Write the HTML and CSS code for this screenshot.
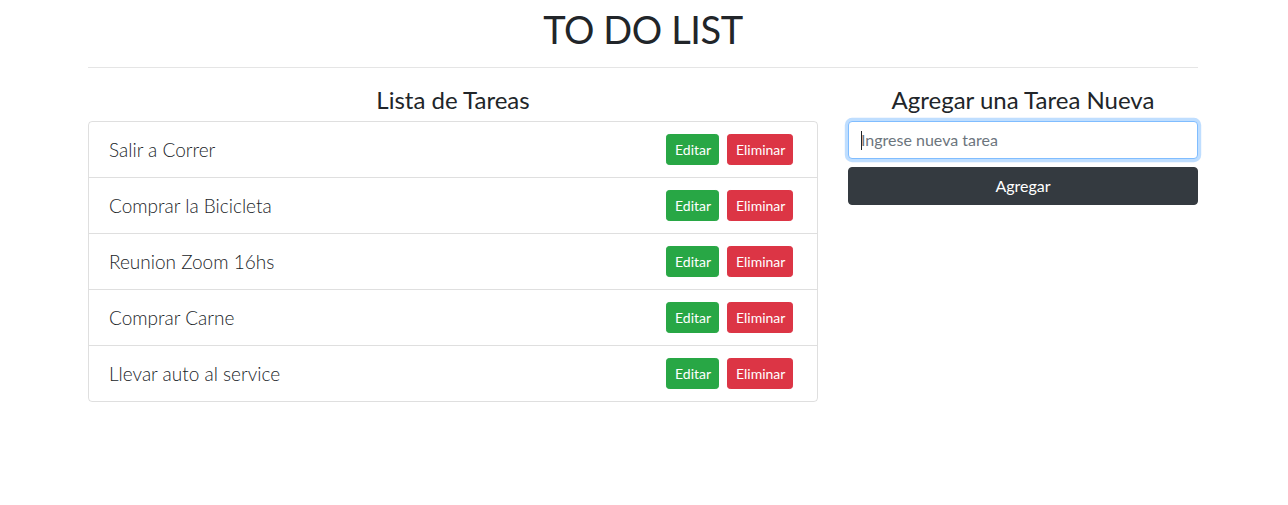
FILE: index.html
```html
<!DOCTYPE html>
<html lang="es">
<head>
<meta charset="utf-8">
<title>TO DO LIST</title>
<link rel="stylesheet" href="styles.css">
</head>
<body>
<div class="container">
  <h1 class="title">TO DO LIST</h1>
  <hr class="divider">
  <div class="row">
    <section class="col-list">
      <h4 class="section-title">Lista de Tareas</h4>
      <ul class="list-group">
        <li class="list-item"><span class="task">Salir a Correr</span><span class="actions"><button class="btn btn-success">Editar</button><button class="btn btn-danger">Eliminar</button></span></li>
        <li class="list-item"><span class="task">Comprar la Bicicleta</span><span class="actions"><button class="btn btn-success">Editar</button><button class="btn btn-danger">Eliminar</button></span></li>
        <li class="list-item"><span class="task">Reunion Zoom 16hs</span><span class="actions"><button class="btn btn-success">Editar</button><button class="btn btn-danger">Eliminar</button></span></li>
        <li class="list-item"><span class="task">Comprar Carne</span><span class="actions"><button class="btn btn-success">Editar</button><button class="btn btn-danger">Eliminar</button></span></li>
        <li class="list-item"><span class="task">Llevar auto al service</span><span class="actions"><button class="btn btn-success">Editar</button><button class="btn btn-danger">Eliminar</button></span></li>
      </ul>
    </section>
    <section class="col-form">
      <h4 class="section-title">Agregar una Tarea Nueva</h4>
      <form class="task-form">
        <div class="input-wrap"><input class="form-control" type="text" placeholder="Ingrese nueva tarea"></div>
        <button type="button" class="btn-dark">Agregar</button>
      </form>
    </section>
  </div>
</div>
</body>
</html>
```
FILE: styles.css
```css
* { box-sizing: border-box; }
body {
  margin: 0;
  font-family: Lato, "Liberation Sans", sans-serif;
  color: #212529;
  background: #fff;
}
.container {
  max-width: 1140px;
  margin: 0 auto;
  padding: 0 16px 0 14px;
}
.title {
  margin: 0;
  padding-top: 5px;
  font-size: 38px;
  font-weight: 400;
  line-height: 48px;
  letter-spacing: -0.4px;
  text-align: center;
}
.divider {
  margin: 14px 0 16px;
  border: 0;
  border-top: 1px solid rgba(0,0,0,.1);
  height: 0;
}
.row {
  display: flex;
  gap: 30px;
}
.col-list { width: 730px; }
.col-form { width: 350px; }
.section-title {
  margin: 0 0 6px;
  padding-top: 2px;
  font-size: 24px;
  font-weight: 400;
  line-height: 28.8px;
  text-align: center;
}
.list-group {
  list-style: none;
  margin: 0;
  padding: 0;
  border: 1px solid rgba(0,0,0,.125);
  border-radius: 4px;
}
.list-item {
  display: flex;
  align-items: center;
  justify-content: space-between;
  padding: 12px 20px;
  height: 55px;
}
.list-item + .list-item {
  border-top: 1px solid rgba(0,0,0,.125);
  height: 56px;
}
.task {
  padding-top: 2px;
  font-size: 19px;
  font-weight: 300;
  line-height: 1.5;
}
.actions {
  display: flex;
  gap: 8px;
  margin-right: 4px;
}
.btn {
  font-family: inherit;
  font-size: 14px;
  line-height: 21px;
  padding: 4px 8px;
  border: 1px solid transparent;
  border-radius: 3.2px;
  color: #fff;
  height: 31px;
}
.btn-success { background: #28a745; border-color: #28a745; width: 53px; }
.btn-danger { background: #dc3545; border-color: #dc3545; width: 66px; }
.task-form {
  display: flex;
  flex-direction: column;
  gap: 8px;
}
.input-wrap { position: relative; }
.input-wrap::before {
  content: "";
  position: absolute;
  left: 13px;
  top: 10px;
  width: 1px;
  height: 19px;
  background: #212529;
}
.form-control {
  display: block;
  width: 100%;
  height: 38px;
  padding: 6px 12px;
  font-family: inherit;
  font-size: 16px;
  color: #495057;
  background: #fff;
  border: 1px solid #80bdff;
  border-radius: 4px;
  box-shadow: 0 0 0 3.2px rgba(0,123,255,.25);
  outline: 0;
}
.form-control::placeholder { color: #6c757d; opacity: 1; }
.btn-dark {
  width: 100%;
  height: 38px;
  font-family: inherit;
  font-size: 16px;
  line-height: 24px;
  color: #fff;
  background: #343a40;
  border: 1px solid #343a40;
  border-radius: 4px;
}
```
